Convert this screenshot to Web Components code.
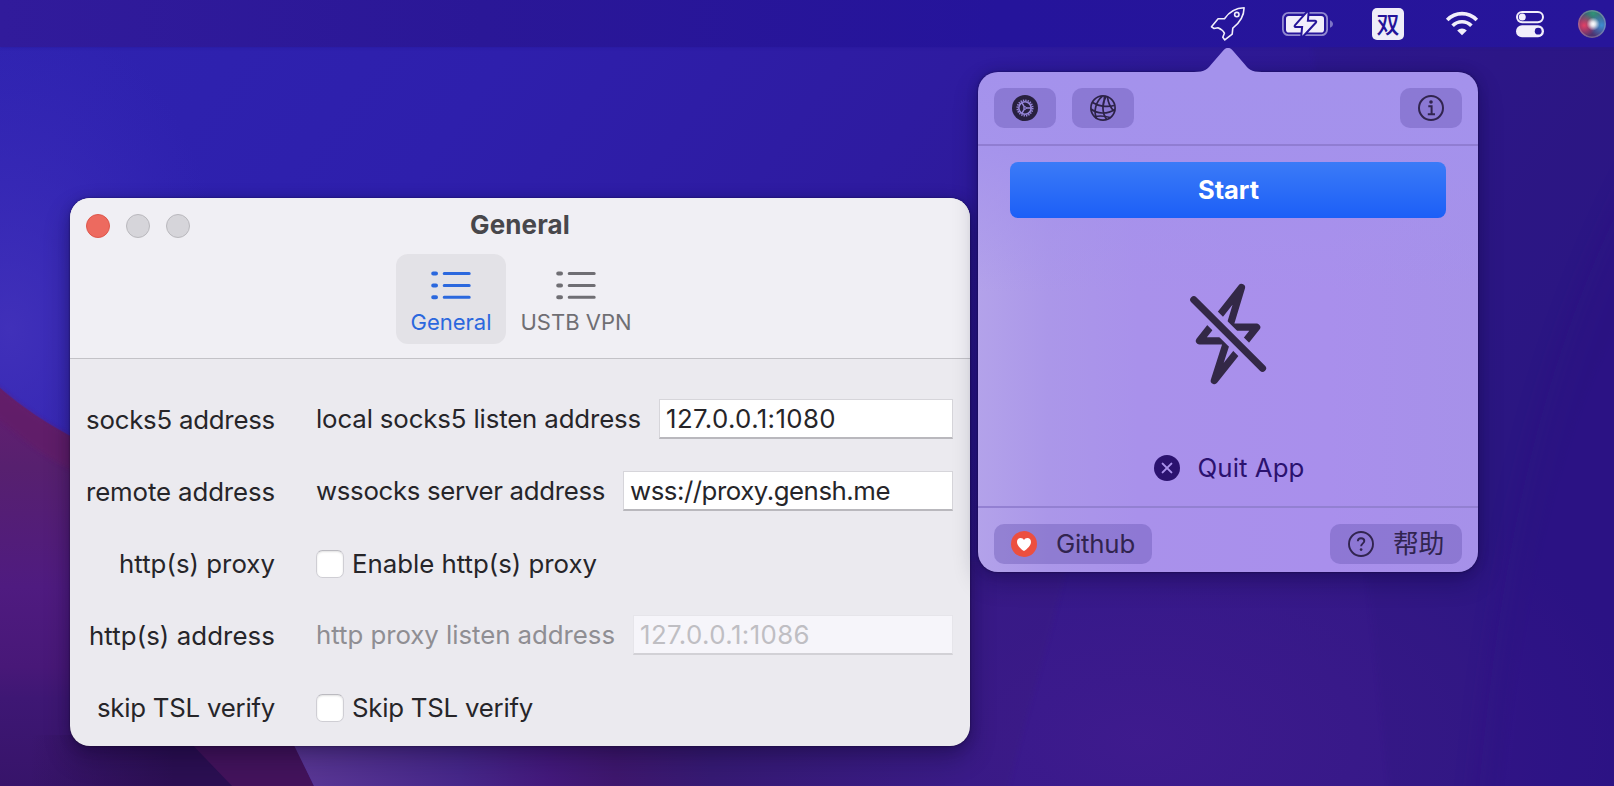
<!DOCTYPE html>
<html lang="en">
<head>
<meta charset="utf-8">
<title>Desktop</title>
<style>
html,body{margin:0;padding:0;width:1614px;height:786px;overflow:hidden;background:#2d1a99}
body{font-family:Inter,"Noto Sans CJK SC",sans-serif}
</style>
</head>
<body>
<desk-top>
  <menu-bar slot="bar"></menu-bar>
  <settings-window slot="windows"></settings-window>
  <pop-over slot="windows"></pop-over>
</desk-top>

<script>
const define = (name, html, setup) => customElements.define(name, class extends HTMLElement {
  constructor() {
    super();
    const t = document.createElement('template');
    t.innerHTML = html;
    this.attachShadow({mode: 'open'}).appendChild(t.content.cloneNode(true));
  }
  connectedCallback() { if (setup) setup(this, this.shadowRoot); }
});

define('desk-top', `
<style>
:host{display:block;position:relative;width:1614px;height:786px;overflow:hidden}
.wall{position:absolute;inset:0;display:block}
.windows{position:absolute;inset:0}
</style>
<svg class="wall" width="1614" height="786" viewBox="0 0 1614 786">
  <defs>
    <linearGradient id="base" x1="0" y1="0" x2="1" y2=".35">
      <stop offset="0" stop-color="#2e23b0"/><stop offset=".3" stop-color="#2e1fac"/>
      <stop offset=".55" stop-color="#2e1ba0"/><stop offset=".85" stop-color="#2d178a"/><stop offset="1" stop-color="#2c1684"/>
    </linearGradient>
    <radialGradient id="glow"><stop offset="0" stop-color="#4534bc" stop-opacity=".8"/><stop offset="1" stop-color="#3a2abc" stop-opacity="0"/></radialGradient>
    <radialGradient id="violet"><stop offset="0" stop-color="#3f1b8e" stop-opacity=".95"/><stop offset=".6" stop-color="#3c1a8a" stop-opacity=".6"/><stop offset="1" stop-color="#3a1a8c" stop-opacity="0"/></radialGradient>
    <linearGradient id="left" x1="0" y1="0" x2="0" y2="1">
      <stop offset="0" stop-color="#651f70"/><stop offset=".2" stop-color="#57206f"/><stop offset=".5" stop-color="#4f1b80"/>
      <stop offset=".7" stop-color="#481878"/><stop offset=".78" stop-color="#3e1774"/><stop offset="1" stop-color="#37146a"/>
    </linearGradient>
    <linearGradient id="foot" x1="0" y1="0" x2="1" y2="0">
      <stop offset="0" stop-color="#5b3896"/><stop offset=".25" stop-color="#46278a"/>
      <stop offset=".38" stop-color="#43197c"/><stop offset=".48" stop-color="#3e176e"/><stop offset=".62" stop-color="#361a74"/><stop offset="1" stop-color="#3a1b88"/>
    </linearGradient>
    <linearGradient id="deep" x1="0" y1="0" x2="1" y2="0"><stop offset="0" stop-color="#2b0f52" stop-opacity="0"/><stop offset=".7" stop-color="#2b0f52"/></linearGradient>
    <filter id="s2" x="-20%" y="-20%" width="140%" height="140%"><feGaussianBlur stdDeviation="2"/></filter>
    <filter id="s12" x="-20%" y="-20%" width="140%" height="140%"><feGaussianBlur stdDeviation="12"/></filter>
  </defs>
  <rect width="1614" height="786" fill="url(#base)"/>
  <ellipse cx="10" cy="330" rx="220" ry="330" fill="url(#glow)"/>
  <ellipse cx="1140" cy="740" rx="520" ry="300" fill="url(#violet)"/>
  <path d="M1310 20H1700V220C1600 300 1520 500 1490 900H1400Z" fill="#2c167c" opacity=".18" filter="url(#s2)"/>
  <path d="M1700 60C1560 290 1500 480 1470 900H1700Z" fill="#2a1184" opacity=".35" filter="url(#s12)"/>
  <path d="M1068 560C1050 640 1030 700 1005 800H860V560Z" fill="#3a1a7c" opacity=".3" filter="url(#s2)"/>
  <path d="M0 388C20 405 45 424 90 446L250 600V786H0Z" fill="url(#left)"/>
  <path d="M-10 380L0 388C20 405 45 424 90 446V478C50 463 25 440 -10 412Z" fill="#631a66" opacity=".6" filter="url(#s2)"/>
  <path d="M30 735H190L236 786H30Z" fill="url(#deep)"/>
  <path d="M183 735H290L314 786H232Z" fill="#43135c"/>
  <path d="M289 735H970V786H314Z" fill="url(#foot)"/>
</svg>
<slot name="bar"></slot>
<div class="windows"><slot name="windows"></slot></div>
`);

define('menu-bar', `
<style>
:host{display:flex;position:relative;height:47px;align-items:center;justify-content:flex-end;box-sizing:border-box;padding-right:8px;
 background:linear-gradient(90deg,#311b9b 0,#2a1797 30%,#25149b 62%,#27159a 100%);box-shadow:0 0 3px rgba(36,20,150,.7)}
svg{display:block;overflow:visible}
.rocket{margin-right:37px}.bat{margin-right:39px}
.ime{width:32px;height:32px;border-radius:5px;background:#efedf8;color:#24139a;display:grid;place-items:center;
 font:500 23px/31px "Noto Sans CJK SC",sans-serif;height:32px;margin-right:42px}
.wifi{margin-right:38px}.cc{margin-right:34px}
.siri{width:28px;height:28px;border-radius:50%;box-shadow:inset 0 0 0 1.5px rgba(190,180,205,.35);
 background:radial-gradient(circle at 54% 50%,#fff 0,rgba(255,255,255,.8) 11%,rgba(255,255,255,0) 32%),
 radial-gradient(circle at 22% 55%,rgba(235,65,100,.95) 0,rgba(200,60,100,0) 44%),
 radial-gradient(circle at 85% 55%,rgba(60,150,220,.9) 0,rgba(60,130,200,0) 45%),
 radial-gradient(circle at 55% 12%,#2f9478 0,rgba(50,120,105,0) 55%),#4c3370}
</style>
<svg class="rocket" width="34" height="34" viewBox="1211.5 7 34 34" fill="none" stroke="#f1eefb" stroke-width="1.6" stroke-linejoin="round">
  <path d="M1244.6 7.8C1237.5 8 1230 11.500 1225 18.700L1218.600 18.800L1212 26.800L1214.600 28.500L1218.400 27.800C1221.500 29 1223.600 30.600 1224.900 33.200L1223.300 37.300L1225.300 39.900L1232.700 34.200L1233.300 28.200C1240.500 22.600 1244.500 16.500 1244.600 7.800Z"/>
  <circle cx="1237.300" cy="14.600" r="2.200"/>
</svg>
<svg class="bat" width="51" height="24" viewBox="1282 12 51 24">
  <rect x="1282.900" y="12.900" width="44.200" height="22.200" rx="5.500" fill="none" stroke="#9189d0" stroke-width="1.800"/>
  <path d="M1330 20.200C1332 21 1333 22.500 1333 24S1332 27 1330 27.800Z" fill="#7d74c6"/>
  <rect x="1286" y="16" width="38" height="16.500" rx="2.800" fill="#f1eefb"/>
  <path d="M1307.600 12.600L1295.600 26H1303.200L1302.300 35.800L1315.200 21.800H1306.800Z" fill="#f1eefb" stroke="#25149a" stroke-width="4" stroke-linejoin="round"/>
  <path d="M1307.600 12.600L1295.600 26H1303.200L1302.300 35.800L1315.200 21.800H1306.800Z" fill="#f1eefb"/>
</svg>
<span class="ime">双</span>
<svg class="wifi" width="32" height="25" viewBox="0 0 32 25" fill="none" stroke="#f1eefb" stroke-width="3.600">
  <path d="M1.200 9C9.500 .5 22.500 .5 30.800 9"/><path d="M6.600 14.700C11.800 9.400 20.200 9.400 25.400 14.700"/>
  <path d="M11.200 19.400C13.900 16.700 18.100 16.700 20.800 19.400L16 24.300Z" fill="#f1eefb" stroke="none"/>
</svg>
<svg class="cc" width="28" height="26" viewBox="0 0 28 26">
  <rect x="1" y="1" width="26" height="10.200" rx="5.100" fill="none" stroke="#f1eefb" stroke-width="2"/>
  <circle cx="6.300" cy="6.100" r="3.500" fill="#f1eefb"/>
  <rect y="14.200" width="28" height="12" rx="6" fill="#f1eefb"/><circle cx="22.200" cy="20.200" r="3.400" fill="#25149a"/>
</svg>
<div class="siri"></div>
`);

define('settings-window', `
<style>
:host{position:absolute;left:70px;top:198px;width:900px;height:548px;box-sizing:border-box;display:flex;flex-direction:column;
 border-radius:20px;overflow:hidden;background:#ebeaef;box-shadow:0 0 2px rgba(0,0,0,.5),0 12px 26px rgba(10,0,30,.3),0 2px 12px rgba(10,0,40,.22)}
header{flex:none;height:161px;box-sizing:border-box;background:#f0eff4;border-bottom:1px solid #c3c2c7}
.title{display:grid;grid-template-columns:1fr auto 1fr;align-items:center;height:56px;padding:0 16px;box-sizing:border-box}
.lights{display:flex;gap:16px;margin-top:-1px}
.lights i{width:24px;height:24px;border-radius:50%;box-sizing:border-box;background:#d6d5da;border:1px solid #b9b8bd}
.lights i:first-child{background:#ed6a5f;border-color:#dd574c}
h1{margin:-2px 0 0;font-weight:700;font-size:26px;line-height:32px;color:#48474b}
nav{display:flex;padding-left:326px}
main{padding:24px 17px 0 15px}
</style>
<header>
  <div class="title"><div class="lights"><i></i><i></i><i></i></div><h1><text-run w="100">General</text-run></h1><span></span></div>
  <nav><tool-tab active><text-run w="81">General</text-run></tool-tab><tool-tab wide><text-run w="111">USTB VPN</text-run></tool-tab></nav>
</header>
<main>
  <form-row><text-run slot="label" w="189">socks5 address</text-run><text-run w="325">local socks5 listen address</text-run><text-field value="127.0.0.1:1080" w="170"></text-field></form-row>
  <form-row><text-run slot="label" w="189">remote address</text-run><text-run w="289">wssocks server address</text-run><text-field value="wss://proxy.gensh.me" w="260"></text-field></form-row>
  <form-row><text-run slot="label" w="156">http(s) proxy</text-run><check-box><text-run w="245">Enable http(s) proxy</text-run></check-box></form-row>
  <form-row off><text-run slot="label" w="186">http(s) address</text-run><text-run w="299">http proxy listen address</text-run><text-field off value="127.0.0.1:1086" w="170"></text-field></form-row>
  <form-row><text-run slot="label" w="178">skip TSL verify</text-run><check-box><text-run w="181">Skip TSL verify</text-run></check-box></form-row>
</main>
`);

define('tool-tab', `
<style>
:host{display:flex;flex-direction:column;align-items:center;box-sizing:border-box;width:110px;height:90px;padding-top:17px;
 border-radius:12px;color:#6f6e73;font-size:22px;line-height:26px}
:host([wide]){width:140px}
:host([active]){background:#e3e2e7;color:#2b68de}
svg{display:block;margin-bottom:9px}
</style>
<svg width="40" height="29" viewBox="0 0 40 29" fill="none" stroke="currentColor" stroke-linecap="round">
  <path stroke-width="4" d="M2.200 2.500H5M2.200 14.400H5M2.200 26.200H5"/><path stroke-width="3" d="M13.200 2.500H38.200M13.200 14.400H38.200M13.200 26.200H38.200"/>
</svg>
<slot></slot>
`);

define('form-row', `
<style>
:host{display:grid;grid-template-columns:190px 1fr;column-gap:41px;align-items:center;height:72px;font-size:25.800px;font-weight:430;line-height:32px;color:#262529}
.label{text-align:right;padding-top:1px}
.control{display:flex;align-items:center;gap:17px;min-width:0;margin-top:-1px}
:host([off]) .control{color:#8f8e93}
</style>
<div class="label"><slot name="label"></slot></div>
<div class="control"><slot></slot></div>
`);

define('text-field', `
<style>
:host{flex:1;display:flex;align-items:center;box-sizing:border-box;height:40px;padding:1px 0 0 6.500px;margin-left:.5px;background:#fff;color:#262529;
 border:1px solid #d6d5da;border-bottom:2px solid #b9b8bd}
:host([off]){background:#f6f5fa;color:#bfbec3;border-color:#e6e5ea;border-bottom-color:#d2d1d6}
</style>
<text-run></text-run>
`, (host, root) => {
  const run = root.querySelector('text-run');
  run.textContent = host.getAttribute('value');
  run.setAttribute('w', host.getAttribute('w'));
});

define('check-box', `
<style>
:host{display:flex;align-items:center;gap:8px;padding-top:2px}
i{width:28px;height:28px;box-sizing:border-box;border-radius:6.500px;background:#fff;border:1px solid #cfced4;border-top-color:#bbbac0;box-shadow:inset 0 1px 2px rgba(0,0,0,.12)}
</style>
<i></i><slot></slot>
`);

define('pop-over', `
<style>
:host{position:absolute;left:978px;top:72px;width:500px;height:500px;border-radius:20px;display:flex;flex-direction:column;color:#31244f;
 background:
  linear-gradient(180deg,rgba(164,146,236,1) 0,rgba(164,146,236,.85) 16%,rgba(164,146,236,0) 44%),
  linear-gradient(90deg,#b3a2ea 0,#ab97e9 14%,#a991eb 32%,#a98fec 70%,#a691e9 100%);
 box-shadow:0 0 2px rgba(0,0,0,.5),0 10px 24px rgba(10,0,50,.3),0 0 12px rgba(10,0,50,.2);font-size:25.800px;font-weight:430;line-height:32px}
.tip{position:absolute;left:216px;top:-24px;display:block}
.bar{display:flex;gap:16px;box-sizing:border-box;padding:16px 16px 0;flex:none}
.top{height:74px;border-bottom:2px solid #907dd2}
.bottom{height:66px;border-top:2px solid #9380d2}
.grow{flex:1}
.mid{flex:1;display:flex;flex-direction:column;align-items:center;padding-top:16px;box-sizing:border-box}
.start{width:436px;height:56px;border-radius:8px;background:linear-gradient(#3b7bf7,#1c5ff7);color:#fff;font-weight:700;font-size:25.500px;display:grid;place-items:center}
.start text-run{margin-top:-1px;margin-left:1px}
.bolt{display:block;margin-top:62px}
.quit{display:flex;align-items:center;gap:18px;margin-top:64px;margin-left:2px;color:#2b126f;height:32px}
svg{display:block}
</style>
<svg class="tip" width="68" height="25" viewBox="0 0 68 25"><path d="M0 25V24C11 24 14 20.500 18 15.500L29.500 2.200Q34 -2.600 38.500 2.200L50 15.500C54 20.500 57 24 68 24V25Z" fill="#a492ec"/></svg>
<div class="bar top">
  <soft-button><svg width="26" height="26" viewBox="0 0 26 26"><circle cx="13" cy="13" r="13" fill="#28203f"/>
    <g fill="none" stroke="#9686da"><circle cx="13" cy="13" r="7.700" stroke-width="1.700" stroke-dasharray="1.350 1.070"/><circle cx="13" cy="13" r="6.200" stroke-width="1.600"/>
    <path d="M13.800 13H19M12.600 12.300L10 7.800M12.600 13.700L10 18.200" stroke-width="1.400"/><circle cx="13" cy="13" r="1.300" stroke-width="1"/></g></svg></soft-button>
  <soft-button><svg width="26" height="26" viewBox="0 0 26 26" fill="none" stroke="#2c2247" stroke-width="1.700"><circle cx="13" cy="13" r="12.100"/>
    <path d="M2.500 7.500C8 11 17 12.500 24 10.500M1 14C7 19 17 19.500 25 14.500M5 21.500C10 20.500 15 21 20 22.500"/>
    <path d="M12.500 1.200C5.500 7 3.500 16 6.500 23.500M16 1.200C12 8 11.500 18 17 24.700M14.500 1C14.500 5 14 8 12.800 12M17.500 1.800C18 7 19 11 24 16"/></svg></soft-button>
  <div class="grow"></div>
  <soft-button><svg width="26" height="26" viewBox="0 0 26 26" fill="none" stroke="#31244f" stroke-width="2"><circle cx="13" cy="13" r="12"/>
    <path d="M10.300 11.300H13.600V18.800M9.800 19.300H17"/><circle cx="13" cy="7" r="1.800" fill="#31244f" stroke="none"/></svg></soft-button>
</div>
<div class="mid">
  <div class="start"><text-run w="61">Start</text-run></div>
  <svg class="bolt" width="80" height="108" viewBox="1188 280 80 108" fill="none" stroke="#332846" stroke-width="7.200" stroke-linejoin="round" stroke-linecap="round">
    <mask id="cut" maskUnits="userSpaceOnUse" x="1180" y="270" width="100" height="130"><rect x="1180" y="270" width="100" height="130" fill="#fff" stroke="none"/><path d="M1180 286L1280 385.500" stroke="#000" stroke-width="17"/></mask>
    <path mask="url(#cut)" d="M1241.500 287.500L1199.500 340.800H1227L1214.300 380.500L1256.700 327.200H1229.500Z"/>
    <path d="M1193.800 299.800L1262.500 368.200"/>
  </svg>
  <div class="quit"><svg width="26" height="26" viewBox="0 0 26 26"><circle cx="13" cy="13" r="13" fill="#2b126f"/><path d="M8.600 8.600L17.400 17.400M17.400 8.600L8.600 17.400" stroke="#a991eb" stroke-width="2" stroke-linecap="round"/></svg><text-run w="107">Quit App</text-run></div>
</div>
<div class="bar bottom">
  <soft-button style="width:158px"><svg width="26" height="26" viewBox="0 0 26 26"><circle cx="13" cy="13" r="13" fill="#ec4f3f"/><path d="M13 20C9.500 17.500 6 14.500 6 10.900C6 8.600 7.600 7 9.600 7C11.200 7 12.400 7.800 13 9.100C13.600 7.800 14.800 7 16.400 7C18.400 7 20 8.600 20 10.900C20 14.500 16.500 17.500 13 20Z" fill="#fff"/></svg><text-run w="79">Github</text-run></soft-button>
  <div class="grow"></div>
  <soft-button style="width:132px"><svg width="26" height="26" viewBox="0 0 26 26" fill="none" stroke="#31244f" stroke-width="1.900"><circle cx="13" cy="13" r="12"/>
    <path d="M9.800 10.200C9.900 8.300 11.200 7.300 13 7.300C15 7.300 16.300 8.400 16.300 10.100C16.300 12.300 13.100 12.500 13.100 15.300"/><circle cx="13.100" cy="18.600" r="1.350" fill="#31244f" stroke="none"/></svg><text-run w="51">帮助</text-run></soft-button>
</div>
`);

define('soft-button', `
<style>
:host{display:flex;align-items:center;justify-content:center;gap:19px;box-sizing:border-box;width:62px;height:40px;padding-bottom:1px;border-radius:10px;background:rgba(92,72,168,.34);flex:none}
</style>
<slot></slot>
`);

/* One line of text, tracked so that its advance equals the "w" attribute. */
define('text-run', `
<style>:host{display:inline-block;white-space:nowrap}span{display:inline-block}</style><span><slot></slot></span>
`, (host, root) => {
  const span = root.querySelector('span');
  const w = parseFloat(host.getAttribute('w'));
  if (!w || !host.textContent) return;
  span.style.letterSpacing = '0';
  const s = (w - span.getBoundingClientRect().width) / host.textContent.length;
  span.style.letterSpacing = s.toFixed(3) + 'px';
});
</script>
</body>
</html>
